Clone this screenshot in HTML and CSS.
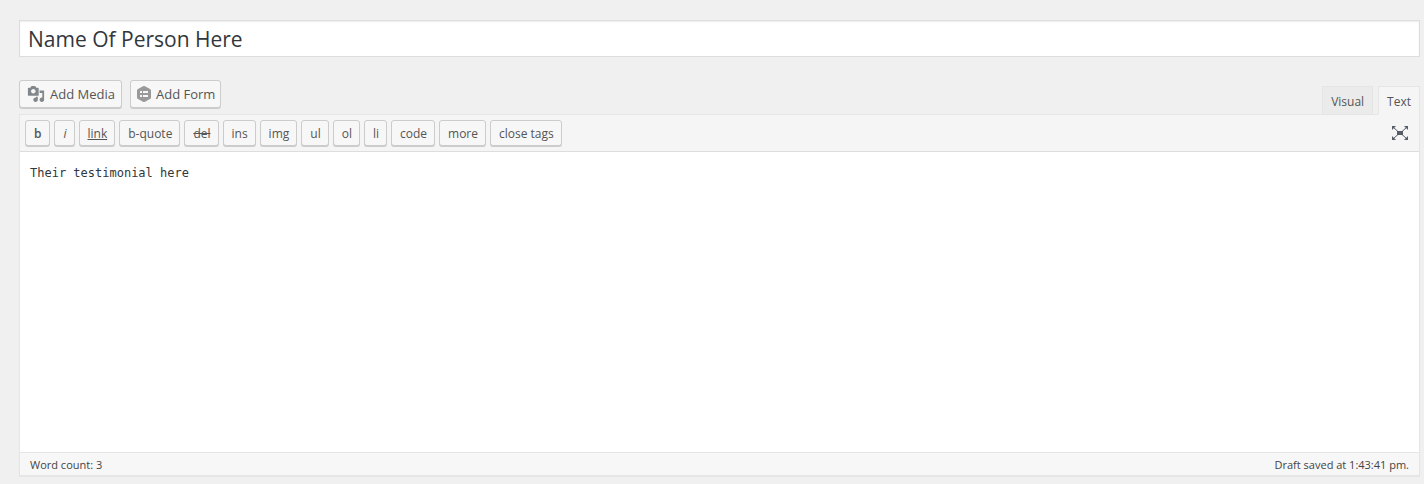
FILE: index.html
```
<!DOCTYPE html>
<html lang="en">
<head>
	<meta charset="UTF-8">
	<title>Edit Testimonial</title>
	<link rel="stylesheet" href="styles.css">
</head>
<body>
	<form id="post">
		<input type="text" id="title" aria-label="Title" value="Name Of Person Here">

		<div class="tools">
			<div class="media-buttons">
				<button type="button" class="button">
					<svg class="icon-media" viewBox="0 0 20 20" aria-hidden="true"><path d="M13 11V4c0-.55-.45-1-1-1h-1.67L9 1H5L3.67 3H2c-.55 0-1 .45-1 1v7c0 .55.45 1 1 1h10c.55 0 1-.45 1-1zM7 4.5c1.38 0 2.5 1.12 2.5 2.5S8.38 9.5 7 9.5 4.5 8.38 4.5 7 5.62 4.5 7 4.5zM14 6h5v10.5c0 1.38-1.12 2.5-2.5 2.5S14 17.88 14 16.5s1.12-2.5 2.5-2.5c.17 0 .34.02.5.05V9h-3V6zm-4 8.05V13h2v3.5c0 1.38-1.12 2.5-2.5 2.5S7 17.88 7 16.5 8.12 14 9.5 14c.17 0 .34.02.5.05z"/></svg>
					Add Media
				</button>
				<button type="button" class="button button-form">
					<svg class="icon-form" viewBox="0 0 14 16" aria-hidden="true"><path fill-rule="evenodd" d="M6 .3Q7-.2 8 .3L13 3Q14 3.600 14 4.600V11.400Q14 12.400 13 13L8 15.700Q7 16.200 6 15.700L1 13Q0 12.400 0 11.400V4.600Q0 3.600 1 3ZM3 5V7H5V5ZM6 5V7H11V5ZM3 9V11H5V9ZM6 9V11H11V9Z"/></svg>
					Add Form
				</button>
			</div>
			<div class="tabs">
				<button type="button" class="tab">Visual</button>
				<button type="button" class="tab active">Text</button>
			</div>
		</div>

		<div class="editor">
			<div class="toolbar">
				<button type="button" class="button small bold">b</button>
				<button type="button" class="button small italic">i</button>
				<button type="button" class="button small link">link</button>
				<button type="button" class="button small">b-quote</button>
				<button type="button" class="button small del">del</button>
				<button type="button" class="button small">ins</button>
				<button type="button" class="button small">img</button>
				<button type="button" class="button small">ul</button>
				<button type="button" class="button small">ol</button>
				<button type="button" class="button small">li</button>
				<button type="button" class="button small">code</button>
				<button type="button" class="button small">more</button>
				<button type="button" class="button small">close tags</button>
				<button type="button" class="fullscreen" aria-label="Distraction-free writing mode">
					<svg viewBox="0 0 16 14" aria-hidden="true">
						<path d="M5 5h6v4H5zM0 0h4L0 4zM16 0v4l-4-4zM0 14v-4l4 4zM16 14h-4l4-4z"/>
						<path class="line" d="M1 1l5 4.500M15 1l-5 4.500M1 13l5-4.500M15 13l-5-4.500"/>
					</svg>
				</button>
			</div>
			<textarea id="content" aria-label="Content" spellcheck="false">Their testimonial here</textarea>
			<div class="status">
				<span>Word count: 3</span>
				<span>Draft saved at 1:43:41 pm.</span>
			</div>
		</div>
	</form>
</body>
</html>
```

FILE: styles.css
```
* {
	box-sizing: border-box;
}
body {
	margin: 0;
	padding: 20px 4px 8px 19px;
	background: #f0f0f0;
	color: #444;
	font-family: "Segoe UI", "Open Sans", sans-serif;
	font-size: 13px;
}
button, input, textarea {
	margin: 0;
	font-family: inherit;
	color: inherit;
}
#title {
	display: block;
	width: 100%;
	height: 37px;
	padding: 3px 8px;
	border: 1px solid #ddd;
	background: #fff;
	box-shadow: inset 0 1px 2px rgba(0, 0, 0, .07);
	color: #32373c;
	font-size: 21px;
	line-height: 29px;
}
.tools {
	display: flex;
	justify-content: space-between;
	align-items: flex-end;
	margin-top: 23px;
}
.media-buttons {
	display: flex;
	gap: 8px;
	margin-bottom: 6px;
}
.button {
	display: flex;
	align-items: center;
	height: 28px;
	padding: 0 5px 0 7px;
	border: 1px solid #ccc;
	border-radius: 3px;
	background: #f7f7f7;
	box-shadow: 0 1px 0 #ccc;
	color: #555;
	font-size: 13px;
	line-height: 26px;
	white-space: nowrap;
	cursor: pointer;
}
.button-form {
	padding: 0 5px 0 6px;
}
.icon-media {
	width: 18px;
	height: 18px;
	margin-right: 5px;
	fill: #82878c;
}
.button:first-child {
	padding-right: 6px;
}
.icon-form {
	width: 14px;
	height: 16px;
	margin-right: 5px;
	fill: #999;
}
.tabs {
	display: flex;
	gap: 5px;
}
.tab {
	height: 28px;
	padding: 1px 8px 0;
	border: 1px solid #e5e5e5;
	border-bottom: 0;
	background: #ebebeb;
	color: #555;
	font-size: 12px;
	line-height: 28px;
	cursor: pointer;
}
/* covers the editor's top border */
.tab.active {
	position: relative;
	height: 29px;
	margin-bottom: -1px;
	background: #f5f5f5;
}
.editor {
	border: 1px solid #e5e5e5;
	box-shadow: 0 1px 1px rgba(0, 0, 0, .04);
}
.toolbar {
	display: flex;
	gap: 4px;
	height: 37px;
	padding: 5px;
	border-bottom: 1px solid #ddd;
	background: #f5f5f5;
}
.button.small {
	height: 26px;
	padding: 1px 7px 0 8px;
	font-size: 12px;
	line-height: 24px;
}
.button.bold {
	padding-right: 8px;
	font-weight: 600;
}
.italic {
	font-style: italic;
}
.link {
	text-decoration: underline;
}
.del {
	text-decoration: line-through;
}
.fullscreen {
	display: flex;
	align-items: center;
	margin-left: auto;
	padding: 0 6px;
	border: 0;
	background: none;
	cursor: pointer;
}
.fullscreen svg {
	width: 16px;
	height: 14px;
	fill: #555d66;
}
.fullscreen .line {
	fill: none;
	stroke: #555d66;
	stroke-width: 1;
}
#content {
	display: block;
	width: 100%;
	height: 300px;
	padding: 10px;
	border: 0;
	background: #fff;
	color: #32373c;
	font-family: Consolas, "DejaVu Sans Mono", monospace;
	font-size: 12px;
	line-height: 22px;
	resize: none;
}
.status {
	display: flex;
	justify-content: space-between;
	padding: 3px 10px 1px;
	border-top: 1px solid #e5e5e5;
	background: #f7f7f7;
	font-size: 11px;
	line-height: 18px;
}
```
